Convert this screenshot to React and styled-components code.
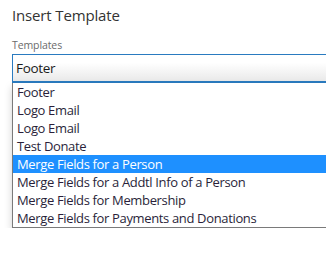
import React from "react";
import styled, { createGlobalStyle } from "styled-components";

const Global = createGlobalStyle`
  html, body {
    margin: 0;
    background: #fff;
    overflow: hidden;
  }
  body {
    font-family: "Segoe UI", "Open Sans", sans-serif;
  }
`;

const Page = styled.div`
  box-sizing: border-box;
  width: 100%;
  padding: 5px 0 0 12px;
`;

const Title = styled.h1`
  margin: 0;
  font-size: 15px;
  font-weight: 400;
  line-height: 20px;
  color: #333;
  letter-spacing: -0.15px;
`;

const Label = styled.div`
  margin-top: 13px;
  font-size: 10.5px;
  line-height: 14px;
  color: #6b6b6b;
  letter-spacing: -0.1px;
`;

const Field = styled.div`
  margin-top: 2px;
  height: 26px;
  border: 1px solid #2a7bc0;
  border-right: none;
  border-bottom: 2px solid #2a7bc0;
  background: linear-gradient(#ffffff 30%, #e9e9e9);
  font-size: 13.5px;
  line-height: 26px;
  padding-left: 3px;
  color: #1b1b1b;
  letter-spacing: -0.3px;
`;

const List = styled.ul`
  list-style: none;
  margin: 0;
  padding: 0;
  border: 1px solid #7a7a7a;
  border-right: none;
  border-top: none;
  background: #fff;
  box-shadow: 0 4px 8px rgba(0, 0, 0, 0.18);
`;

const Item = styled.li`
  height: 18px;
  line-height: 18px;
  padding-left: 4px;
  font-size: 13px;
  letter-spacing: -0.35px;
  color: ${(p) => (p.$active ? "#fff" : "#2a1f3a")};
  background: ${(p) => (p.$active ? "#1e90ff" : "transparent")};
  white-space: nowrap;
`;

const items = [
  "Footer",
  "Logo Email",
  "Logo Email",
  "Test Donate",
  "Merge Fields for a Person",
  "Merge Fields for a Addtl Info of a Person",
  "Merge Fields for Membership",
  "Merge Fields for Payments and Donations",
];

export default function App() {
  return (
    <>
      <Global />
      <Page>
        <Title>Insert Template</Title>
        <Label>Templates</Label>
        <Field>Footer</Field>
        <List>
          {items.map((t, i) => (
            <Item key={i} $active={i === 4}>
              {t}
            </Item>
          ))}
        </List>
      </Page>
    </>
  );
}
